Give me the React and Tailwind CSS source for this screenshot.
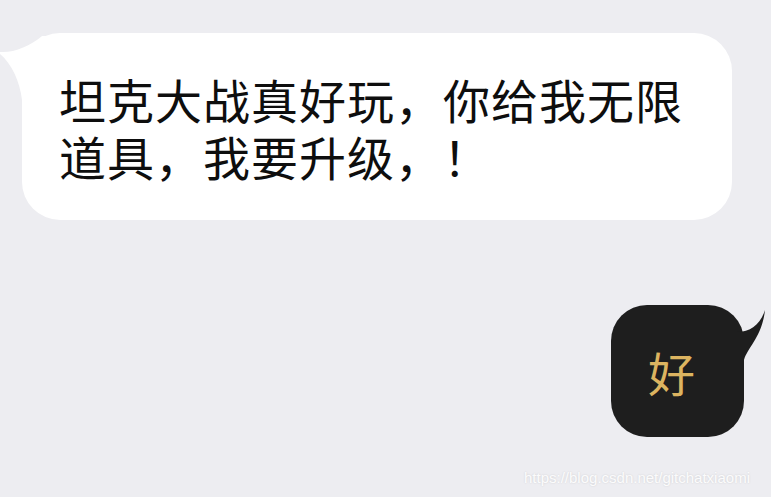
import React from "react";

export default function App() {
  const cjk = { fontFamily: '"Noto Sans CJK SC", "Noto Sans", sans-serif' };
  return (
    <div className="relative w-[771px] h-[497px] overflow-hidden bg-[#ededf1] pt-[33px]">
      {/* incoming bubble */}
      <div className="relative ml-[22px] w-[710px] h-[187px] rounded-[38px] bg-white pl-[37px] pr-[30px] pt-[37px]">
        <svg className="absolute left-[-22px] top-[-3px]" width="60" height="80" viewBox="0 0 60 80">
          <path
            d="M0 22 C14 23 30 16 42 6 L60 6 L60 80 L22 80 L22 70 C20 52 12 34 0 24 Z"
            fill="#ffffff"
          />
        </svg>
        <p
          className="relative text-[47px] leading-[57px] text-[#0e0e0e] tracking-[1px]"
          style={cjk}
        >
          坦克大战真好玩，你给我无限道具，我要升级，！
        </p>
      </div>

      {/* outgoing bubble */}
      <div className="relative mt-[85px] ml-[611px] w-[133px] h-[132px] rounded-[36px] bg-[#1e1e1e] flex items-center pl-[37px]">
        <svg className="absolute left-[109px] top-0" width="50" height="60" viewBox="0 0 50 60">
          <path
            d="M45 5 C40 20 30 28 14 27 L0 27 L0 60 L24 60 L24 55 C28 42 42 32 45 5 Z"
            fill="#1e1e1e"
          />
        </svg>
        <span className="relative text-[47px] leading-none text-[#dcb460]" style={cjk}>
          好
        </span>
      </div>

      {/* watermark */}
      <div
        className="absolute left-[524px] top-[468px] text-[15px] leading-[20px] text-white/90 [text-shadow:0_0_2px_rgba(0,0,0,0.15)]"
        style={{ fontFamily: '"Liberation Sans", Arial, sans-serif' }}
      >
        https://blog.csdn.net/gitchatxiaomi
      </div>
    </div>
  );
}
